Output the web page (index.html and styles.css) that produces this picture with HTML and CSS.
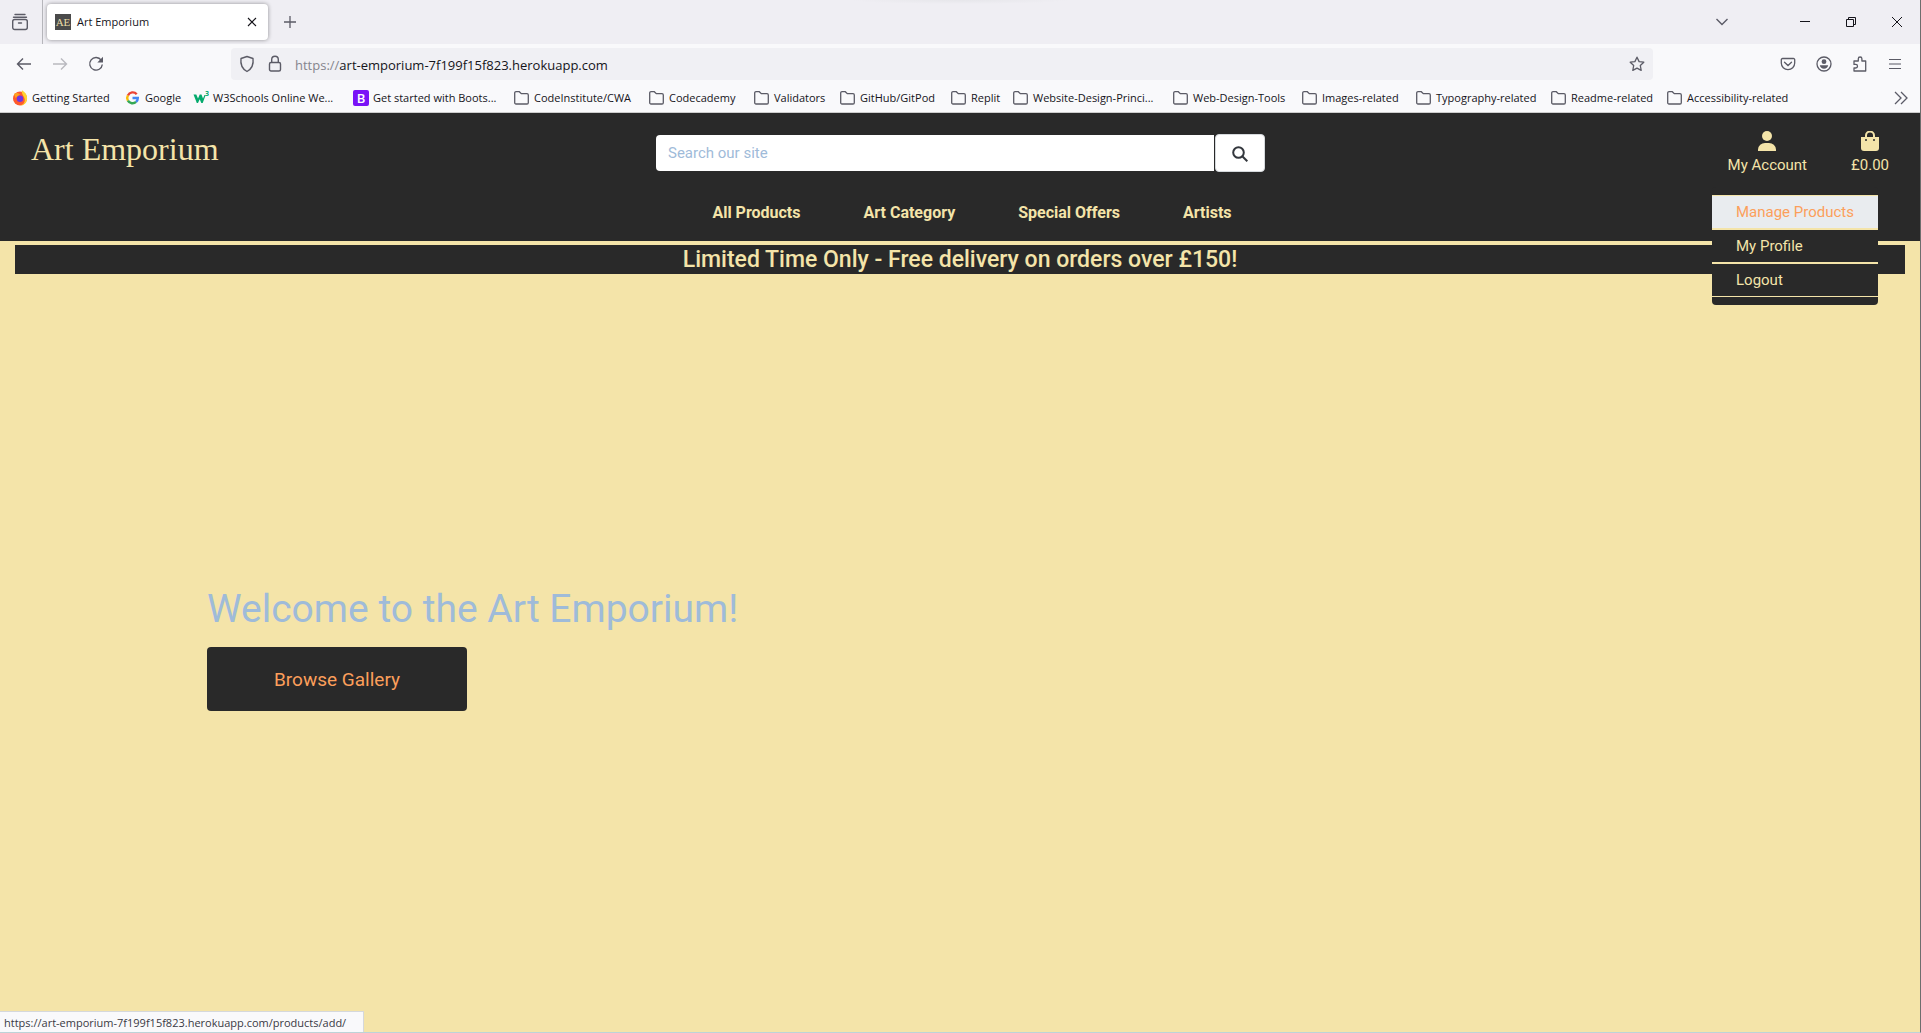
FILE: index.html
```
<!DOCTYPE html>
<html lang="en">
<head>
<meta charset="utf-8">
<title>Art Emporium</title>
<link rel="stylesheet" href="styles.css">
</head>
<body>
<svg class="sprite" aria-hidden="true">
  <symbol id="folder" viewBox="0 0 16 16"><path d="M2 1.700h3.300l2 2H13a1.300 1.300 0 0 1 1.300 1.300v7.700a1.300 1.300 0 0 1-1.300 1.300H2a1.300 1.300 0 0 1-1.300-1.300V3a1.300 1.300 0 0 1 1.300-1.300z" fill="none" stroke="#5b5b66" stroke-width="1.300"/></symbol>
</svg>

<div class="chrome">
  <div class="tabbar">
    <button class="icon-btn view-btn" aria-label="Recent browsing">
      <svg width="18" height="18" viewBox="0 0 18 18" fill="none" stroke="#5b5b66" stroke-width="1.4" stroke-linecap="round"><path d="M4 1.500h10M2.500 4.300h13"/><rect x="1.700" y="6.500" width="14.600" height="10" rx="2"/><path d="M7.500 10h3"/></svg>
    </button>
    <div class="tab">
      <span class="favicon">AE</span>
      <span class="tab-title">Art Emporium</span>
      <button class="icon-btn tab-close" aria-label="Close tab"><svg width="10" height="10" viewBox="0 0 10 10"><path d="M1 1l8 8M9 1l-8 8" stroke="#15141a" stroke-width="1.1"/></svg></button>
    </div>
    <button class="icon-btn" aria-label="New tab"><svg width="14" height="14" viewBox="0 0 14 14"><path d="M7 1v12M1 7h12" stroke="#5b5b66" stroke-width="1.3"/></svg></button>
    <div class="window-controls">
      <button class="icon-btn list-tabs" aria-label="List all tabs"><svg width="14" height="14" viewBox="0 0 14 14"><path d="M1.500 4l5.500 5.500L12.500 4" fill="none" stroke="#5b5b66" stroke-width="1.4"/></svg></button>
      <button class="icon-btn" aria-label="Minimize"><svg width="10" height="10" viewBox="0 0 10 10"><path d="M0 4.500h10" stroke="#15141a"/></svg></button>
      <button class="icon-btn" aria-label="Restore"><svg width="10" height="10" viewBox="0 0 10 10" fill="none" stroke="#15141a"><path d="M.5 2.500h7v7h-7zM2.500 2.500v-2h7v7h-2"/></svg></button>
      <button class="icon-btn" aria-label="Close window"><svg width="10" height="10" viewBox="0 0 10 10"><path d="M0 0l10 10M10 0L0 10" stroke="#15141a"/></svg></button>
    </div>
  </div>

  <div class="toolbar">
    <div class="nav-buttons">
      <button class="icon-btn" aria-label="Back"><svg width="16" height="16" viewBox="0 0 16 16" fill="none" stroke="#5b5b66" stroke-width="1.4"><path d="M15 8H1.500M7 2.500L1.500 8 7 13.500"/></svg></button>
      <button class="icon-btn" aria-label="Forward" disabled><svg width="16" height="16" viewBox="0 0 16 16" fill="none" stroke="#b9b9bf" stroke-width="1.4"><path d="M1 8h13.500M9 2.500L14.500 8 9 13.500"/></svg></button>
      <button class="icon-btn" aria-label="Reload"><svg width="16" height="16" viewBox="0 0 16 16"><path d="M13.200 4.200A6.300 6.300 0 1 0 14.300 8.500" fill="none" stroke="#5b5b66" stroke-width="1.400"/><path d="M15 .8v5.700H9.300z" fill="#5b5b66"/></svg></button>
    </div>
    <div class="urlbar">
      <svg width="16" height="18" viewBox="0 0 16 18" fill="none" stroke="#5b5b66" stroke-width="1.400"><path d="M8 1.500l6 2c.8 6-1.500 10.500-6 13-4.500-2.500-6.800-7-6-13z" stroke-linejoin="round"/></svg>
      <svg width="14" height="18" viewBox="0 0 14 18" fill="none" stroke="#5b5b66" stroke-width="1.400"><rect x="1.500" y="7.500" width="11" height="8.500" rx="1.500"/><path d="M3.700 7.500V4.500a3.300 3.300 0 0 1 6.600 0v3"/></svg>
      <span class="url"><span class="scheme">https://</span>art-emporium-7f199f15f823.herokuapp.com</span>
      <button class="icon-btn" aria-label="Bookmark this page"><svg width="16" height="16" viewBox="0 0 16 16"><path d="M8 1.200l2.100 4.400 4.700.6-3.500 3.300.9 4.900L8 12.100l-4.200 2.300.9-4.900L1.200 6.200l4.700-.6z" fill="none" stroke="#5b5b66" stroke-width="1.300" stroke-linejoin="round"/></svg></button>
    </div>
    <div class="tool-buttons">
      <button class="icon-btn" aria-label="Save to Pocket"><svg width="16" height="16" viewBox="0 0 16 16" fill="none" stroke="#5b5b66" stroke-width="1.300"><path d="M2.500 2.500h11a1.200 1.200 0 0 1 1.200 1.200V7A6.700 6.700 0 0 1 1.300 7V3.700a1.200 1.200 0 0 1 1.200-1.200z"/><path d="M4.500 6.300L8 9.500l3.500-3.200" stroke-linecap="round"/></svg></button>
      <button class="icon-btn" aria-label="Account"><svg width="16" height="16" viewBox="0 0 16 16" fill="#5b5b66"><circle cx="8" cy="8" r="7" fill="none" stroke="#5b5b66" stroke-width="1.300"/><circle cx="8" cy="5.700" r="2.400"/><path d="M3.800 9.300h8.400A4.300 4.300 0 0 1 3.800 9.300z"/></svg></button>
      <button class="icon-btn" aria-label="Extensions"><svg width="16" height="16" viewBox="0 0 16 16" fill="none" stroke="#5b5b66" stroke-width="1.300"><path d="M2 15V12h1.700a1.800 1.800 0 0 0 0-3.600H2V5h4.300V2.800a1.800 1.800 0 0 1 3.600 0V5h3.800v10z" stroke-linejoin="round"/></svg></button>
      <button class="icon-btn" aria-label="Open menu"><svg width="14" height="12" viewBox="0 0 14 12"><path d="M1 1.500h12M1 6h12M1 10.500h12" stroke="#5b5b66" stroke-width="1.200"/></svg></button>
    </div>
  </div>

  <nav class="bookmarks" aria-label="Bookmarks">
    <a href="#"><svg viewBox="0 0 16 16"><circle cx="8" cy="8.500" r="7" fill="#ff5a2c"/><path d="M10 .3c3.500 2 5.500 5 5.100 8.700A7 7 0 0 1 8 15.500c4-1 5.500-4 4.500-7C12 6 9 4 10 .3z" fill="#ffd32e"/><path d="M2 4c2-1.500 4.500-1 6 .5L3.500 8z" fill="#ffa21f"/><circle cx="8" cy="8.800" r="3.200" fill="#7136e0"/></svg>Getting Started</a>
    <a href="#"><svg viewBox="0 0 16 16" fill="none" stroke-width="2.400"><path d="M11.700 4.200A5.300 5.300 0 0 0 2.900 5.400" stroke="#ea4335"/><path d="M2.900 5.400a5.300 5.300 0 0 0 0 5.200" stroke="#fbbc05"/><path d="M2.900 10.600a5.300 5.300 0 0 0 8.200 1.300" stroke="#34a853"/><path d="M11.100 11.900A5.300 5.300 0 0 0 12.800 8H7.500" stroke="#4285f4"/></svg>Google</a>
    <a href="#"><svg viewBox="0 0 16 16"><path d="M.5 4.500h2.800l1.700 4 1.700-4h1.800l1.500 4 1.500-3.500h1.200L9.700 13H8.300L6.700 9.300 5 13H3.800z" fill="#04aa6d"/><text x="12" y="6" font-size="7" font-weight="700" fill="#04aa6d">3</text></svg>W3Schools Online We...</a>
    <a href="#"><span class="bootstrap">B</span>Get started with Boots...</a>
    <a href="#"><svg><use href="#folder"/></svg>CodeInstitute/CWA</a>
    <a href="#"><svg><use href="#folder"/></svg>Codecademy</a>
    <a href="#"><svg><use href="#folder"/></svg>Validators</a>
    <a href="#"><svg><use href="#folder"/></svg>GitHub/GitPod</a>
    <a href="#"><svg><use href="#folder"/></svg>Replit</a>
    <a href="#"><svg><use href="#folder"/></svg>Website-Design-Princi...</a>
    <a href="#"><svg><use href="#folder"/></svg>Web-Design-Tools</a>
    <a href="#"><svg><use href="#folder"/></svg>Images-related</a>
    <a href="#"><svg><use href="#folder"/></svg>Typography-related</a>
    <a href="#"><svg><use href="#folder"/></svg>Readme-related</a>
    <a href="#"><svg><use href="#folder"/></svg>Accessibility-related</a>
    <button class="icon-btn more" aria-label="More bookmarks"><svg viewBox="0 0 16 16" fill="none" stroke="#5b5b66" stroke-width="1.300"><path d="M3 2l6 6-6 6M9 2l6 6-6 6"/></svg></button>
  </nav>
</div>

<div class="page">
  <header class="site-header">
    <a class="logo" href="#">Art Emporium</a>
    <form class="search">
      <input type="text" placeholder="Search our site" aria-label="Search our site">
      <button type="button" aria-label="Search"><svg width="16" height="16" viewBox="0 0 16 16" fill="none" stroke="#33373d" stroke-width="2"><circle cx="6.500" cy="6.500" r="5.300"/><path d="M10.300 10.300l5 5"/></svg></button>
    </form>
    <div class="account">
      <a href="#"><svg width="18" height="20" viewBox="0 0 18 20" fill="#f4e4a9"><circle cx="9" cy="5" r="5"/><path d="M0 20v-1.500A7 7 0 0 1 7 12h4a7 7 0 0 1 7 6.500V20z"/></svg>My Account</a>
      <a href="#"><svg width="18" height="20" viewBox="0 0 18 20" fill="#f4e4a9"><path d="M5 7V4.500a4 4 0 0 1 8 0V7" fill="none" stroke="#f4e4a9" stroke-width="2"/><path d="M0 6h18v11a3 3 0 0 1-3 3H3a3 3 0 0 1-3-3z"/><circle cx="5" cy="9" r="1" fill="#292929"/><circle cx="13" cy="9" r="1" fill="#292929"/></svg>£0.00</a>
      <div class="menu">
        <a class="active" href="#">Manage Products</a>
        <a href="#">My Profile</a>
        <a href="#">Logout</a>
      </div>
    </div>
    <nav class="site-nav">
      <a href="#">All Products</a>
      <a href="#">Art Category</a>
      <a href="#">Special Offers</a>
      <a href="#">Artists</a>
    </nav>
  </header>
  <div class="banner">Limited Time Only - Free delivery on orders over £150!</div>
  <main class="hero">
    <h1>Welcome to the Art Emporium!</h1>
    <button class="browse">Browse Gallery</button>
  </main>
</div>
<div class="status">https://art-emporium-7f199f15f823.herokuapp.com/products/add/</div>
</body>
</html>
```
FILE: styles.css
```
* { box-sizing: border-box; }

body {
  margin: 0;
  min-height: 100vh;
  display: flex;
  flex-direction: column;
  background: #f4e4a9;
  border-right: 1px solid #6e6e6e;
  border-bottom: 1px solid #bcd3d8;
  font-family: Roboto, sans-serif;
}

a { color: inherit; text-decoration: none; }
button, input { font: inherit; }
.sprite { display: none; }

.icon-btn {
  display: flex;
  align-items: center;
  justify-content: center;
  padding: 0;
  border: 0;
  background: none;
}

/* Browser window */
.chrome {
  background: #f9f9fb;
  border-bottom: 1px solid #cccccc;
  color: #15141a;
  font: 11px/16px "Open Sans", sans-serif;
}

.tabbar {
  display: flex;
  align-items: center;
  height: 44px;
  padding-right: 18px;
  background: radial-gradient(ellipse 110px 4px at 50% 0, #e6e6ea, #efeef3);
}

.view-btn {
  width: 43px;
  height: 44px;
  padding-right: 3px;
  border-right: 1px solid #b6b6bb;
}

.tab {
  display: flex;
  align-items: center;
  gap: 6px;
  width: 221px;
  height: 36px;
  margin: 0 15px 0 4px;
  padding: 0 11px 0 8px;
  border-radius: 4px;
  background: #fff;
  box-shadow: 0 0 4px rgba(0, 0, 0, .4);
}

.favicon {
  width: 16px;
  background: #4a4a4a;
  color: #e8dca6;
  font: 11px/16px "Liberation Serif", serif;
  text-align: center;
}

.tab-close { margin-left: auto; }

.window-controls { display: flex; gap: 36px; margin-left: auto; }
.list-tabs { margin-right: 35px; }

.toolbar { display: flex; align-items: center; height: 40px; }
.nav-buttons { display: flex; gap: 20px; width: 231px; padding-left: 16px; }

.urlbar {
  display: flex;
  align-items: center;
  gap: 13px;
  flex: 1;
  height: 32px;
  padding: 0 8px;
  border-radius: 4px;
  background: #f0f0f4;
  font-size: 13px;
}

.url { flex: 1; padding-top: 1px; }
.scheme { color: #85858d; }

.tool-buttons {
  display: flex;
  justify-content: flex-end;
  gap: 20px;
  width: 267px;
  padding-right: 18px;
}

.bookmarks {
  display: grid;
  grid-template-columns: 113px 68px 160px 161px 135px 105px 86px 111px 62px 160px 129px 114px 135px 116px 1fr 16px;
  align-items: center;
  height: 28px;
  padding: 0 12px;
  white-space: nowrap;
}

.bookmarks a { display: flex; align-items: center; gap: 4px; }
.bookmarks svg { flex: none; width: 16px; height: 16px; }

.bootstrap {
  width: 16px;
  border-radius: 2px;
  background: #7a12f7;
  color: #fff;
  font-size: 13px;
  font-weight: 600;
  text-align: center;
}

/* Site */
.page { flex: 1; display: flex; flex-direction: column; }

.site-header {
  display: grid;
  grid-template-columns: 1fr 1fr 1fr;
  grid-template-rows: 80px 48px;
  background: #292929;
  color: #f4e4a9;
}

.logo {
  padding: 16px 31px;
  font: 32px/40px "Liberation Serif", serif;
}

.search { display: flex; align-items: center; padding: 0 15px 0 16px; }

.search input {
  flex: 1;
  height: 36px;
  margin-right: 1px;
  padding: 0 12px;
  border: 0;
  border-radius: 4px 0 0 4px;
  background: #fff;
  font-size: 15px;
}

.search input::placeholder { color: #9fbbd9; opacity: 1; }

.search button {
  width: 50px;
  height: 38px;
  border: 1px solid #d5d9dc;
  border-radius: 4px;
  background: #fff;
}

.search svg { vertical-align: middle; }

.account {
  position: relative;
  display: flex;
  justify-content: flex-end;
  gap: 44px;
  padding: 18px 31px 0;
  font-size: 15px;
  line-height: 24px;
}

.account > a { display: flex; flex-direction: column; align-items: center; gap: 2px; }

.menu {
  position: absolute;
  z-index: 1;
  top: 74px;
  right: 42px;
  width: 166px;
  padding: 8px 0;
  border-radius: 4px;
  background: #292929;
}

.menu a {
  display: block;
  padding: 4px 24px;
  border: solid #f4e4a9;
  border-width: 1px 0;
}

.menu .active { background: #e9ecef; color: #fc9f5b; }

.site-nav {
  grid-column: 2;
  display: flex;
  justify-content: center;
  gap: 63px;
  padding: 8px 0 0 24px;
  font-weight: 700;
  line-height: 24px;
  white-space: nowrap;
}

.banner {
  margin: 4px 15px 0;
  padding-top: 1px;
  background: #292929;
  color: #f4e4a9;
  font-size: 23px;
  font-weight: 500;
  line-height: 28px;
  text-align: center;
}

.hero {
  flex: 1;
  display: flex;
  flex-direction: column;
  align-items: flex-start;
  justify-content: center;
  gap: 15px;
  padding: 0 207px 10px;
}

.hero h1 {
  margin: 0;
  color: #9fbbd9;
  font-size: 39px;
  font-weight: 400;
  line-height: 46px;
}

.browse {
  width: 260px;
  height: 64px;
  padding: 2px 0 0;
  border: 0;
  border-radius: 4px;
  background: #292929;
  color: #fc9f5b;
  font-size: 19px;
}

/* Link target shown over the page's lower left corner */
.status {
  position: fixed;
  left: 0;
  bottom: 1px;
  width: 364px;
  padding: 2px 4px 1px;
  border: solid #d5d8dc;
  border-width: 1px 1px 0 0;
  background: #f9f9fb;
  color: #3a3944;
  font: 11px/17px "Open Sans", sans-serif;
}
```
